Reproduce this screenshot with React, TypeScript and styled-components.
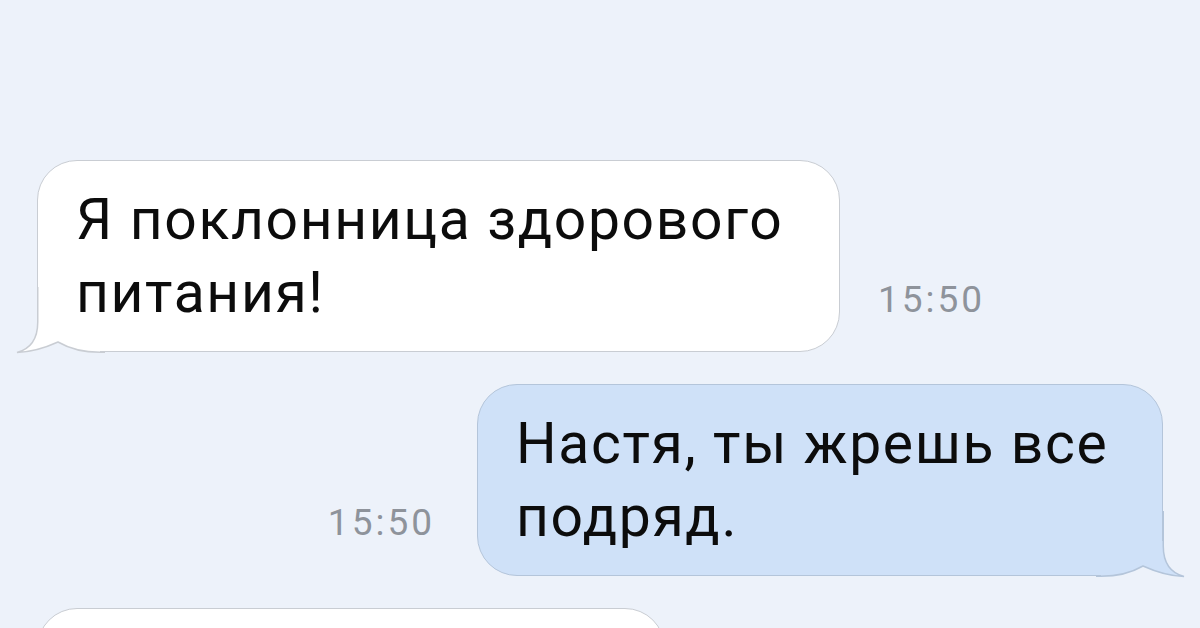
import React, {FC} from 'react';
import styled, {createGlobalStyle} from "styled-components";

const GlobalStyle = createGlobalStyle`
  html, body {
    margin: 0;
    padding: 0;
    background: #edf2fa;
  }
  body {
    width: 1200px;
    height: 628px;
    overflow: hidden;
    font-family: Roboto, "Noto Sans", sans-serif;
  }
`

type Side = 'in' | 'out'

const BG = '#edf2fa'
const colors = {
    in: {fill: '#ffffff', line: '#c9cdd3'},
    out: {fill: '#cfe1f8', line: '#b4c5da'},
}

// tail drawn for the incoming side, the outgoing one is mirrored
const Tail: FC<{ side: Side }> = ({side}) => {
    const c = colors[side]
    const edge = 'M22.75,0 L22.75,35 C22.75,52 15,62 2,65.5 C18,65 32,60 43,55 C55,62 68,65.25 85,65.25 L90,65.25'
    return (
        <TailSvg side={side} width="90" height="70" viewBox="0 0 90 70">
            <path d="M0,70 L0,65.5 L2,65.5 C18,65 32,60 43,55 C55,62 68,65.25 85,65.25 L85,66 L90,66 L90,70 Z"
                  fill={BG}/>
            <path d="M22.75,30 L22.75,35 C22.75,52 15,62 2,65.5 C18,65 32,60 43,55 C55,62 68,65.25 85,65.25 L85,30 Z"
                  fill={c.fill}/>
            <path d={edge} fill="none" stroke={c.line} strokeWidth="1.5"/>
        </TailSvg>
    )
}

type MessageType = {
    side: Side
    width: number
    time?: string
    lines?: string[]
    tail?: boolean
    height?: number
}

const Message: FC<MessageType> = ({side, width, time, lines, tail, height}) => {
    const bubble = (
        <Bubble side={side} w={width} h={height} tail={!!tail}>
            {lines && lines.map((l, i) => <Line key={i}>{l}</Line>)}
            {tail && <Tail side={side}/>}
        </Bubble>
    )
    return (
        <Row side={side}>
            {side === 'out' && time && <Time side={side}>{time}</Time>}
            {bubble}
            {side === 'in' && time && <Time side={side}>{time}</Time>}
        </Row>
    )
}

const App: FC = () => {
    return (
        <>
            <GlobalStyle/>
            <Chat>
                <Message side={'in'} width={803} time={'15:50'} tail
                         lines={['Я поклонница здорового', 'питания!']}/>
                <Message side={'out'} width={686} time={'15:50'} tail
                         lines={['Настя, ты жрешь все', 'подряд.']}/>
                <Message side={'in'} width={628} height={160}/>
            </Chat>
        </>
    );
};

export default App;

const Chat = styled.div`
  display: flex;
  flex-direction: column;
  gap: 32px;
  padding-top: 160px;
`
const Row = styled.div<{ side: Side }>`
  display: flex;
  align-items: flex-end;
  justify-content: ${({side}) => side === 'in' ? 'flex-start' : 'flex-end'};
  padding: ${({side}) => side === 'in' ? '0 0 0 37px' : '0 37px 0 0'};
`
const Bubble = styled.div<{ side: Side, w: number, h?: number, tail: boolean }>`
  position: relative;
  box-sizing: border-box;
  width: ${({w}) => w}px;
  ${({h}) => h ? `min-height: ${h}px;` : ''}
  flex-shrink: 0;
  padding: 22px 38px;
  background: ${({side}) => colors[side].fill};
  border: 1.5px solid ${({side}) => colors[side].line};
  border-radius: ${({side, tail}) => !tail ? '40px' : side === 'in' ? '40px 40px 40px 0' : '40px 40px 0 40px'};
`
const Line = styled.div`
  font-size: 57px;
  line-height: 73px;
  letter-spacing: 1.65px;
  color: #0c0c0c;
  white-space: nowrap;
`
const Time = styled.span<{ side: Side }>`
  font-size: 37px;
  line-height: 36px;
  letter-spacing: 3px;
  color: #8e939b;
  margin: ${({side}) => side === 'in' ? '0 0 34px 38px' : '0 42px 35px 0'};
`
const TailSvg = styled.svg<{ side: Side }>`
  position: absolute;
  bottom: -5.5px;
  ${({side}) => side === 'in' ? 'left: -23.5px;' : 'right: -23.5px; transform: scaleX(-1);'}
`
